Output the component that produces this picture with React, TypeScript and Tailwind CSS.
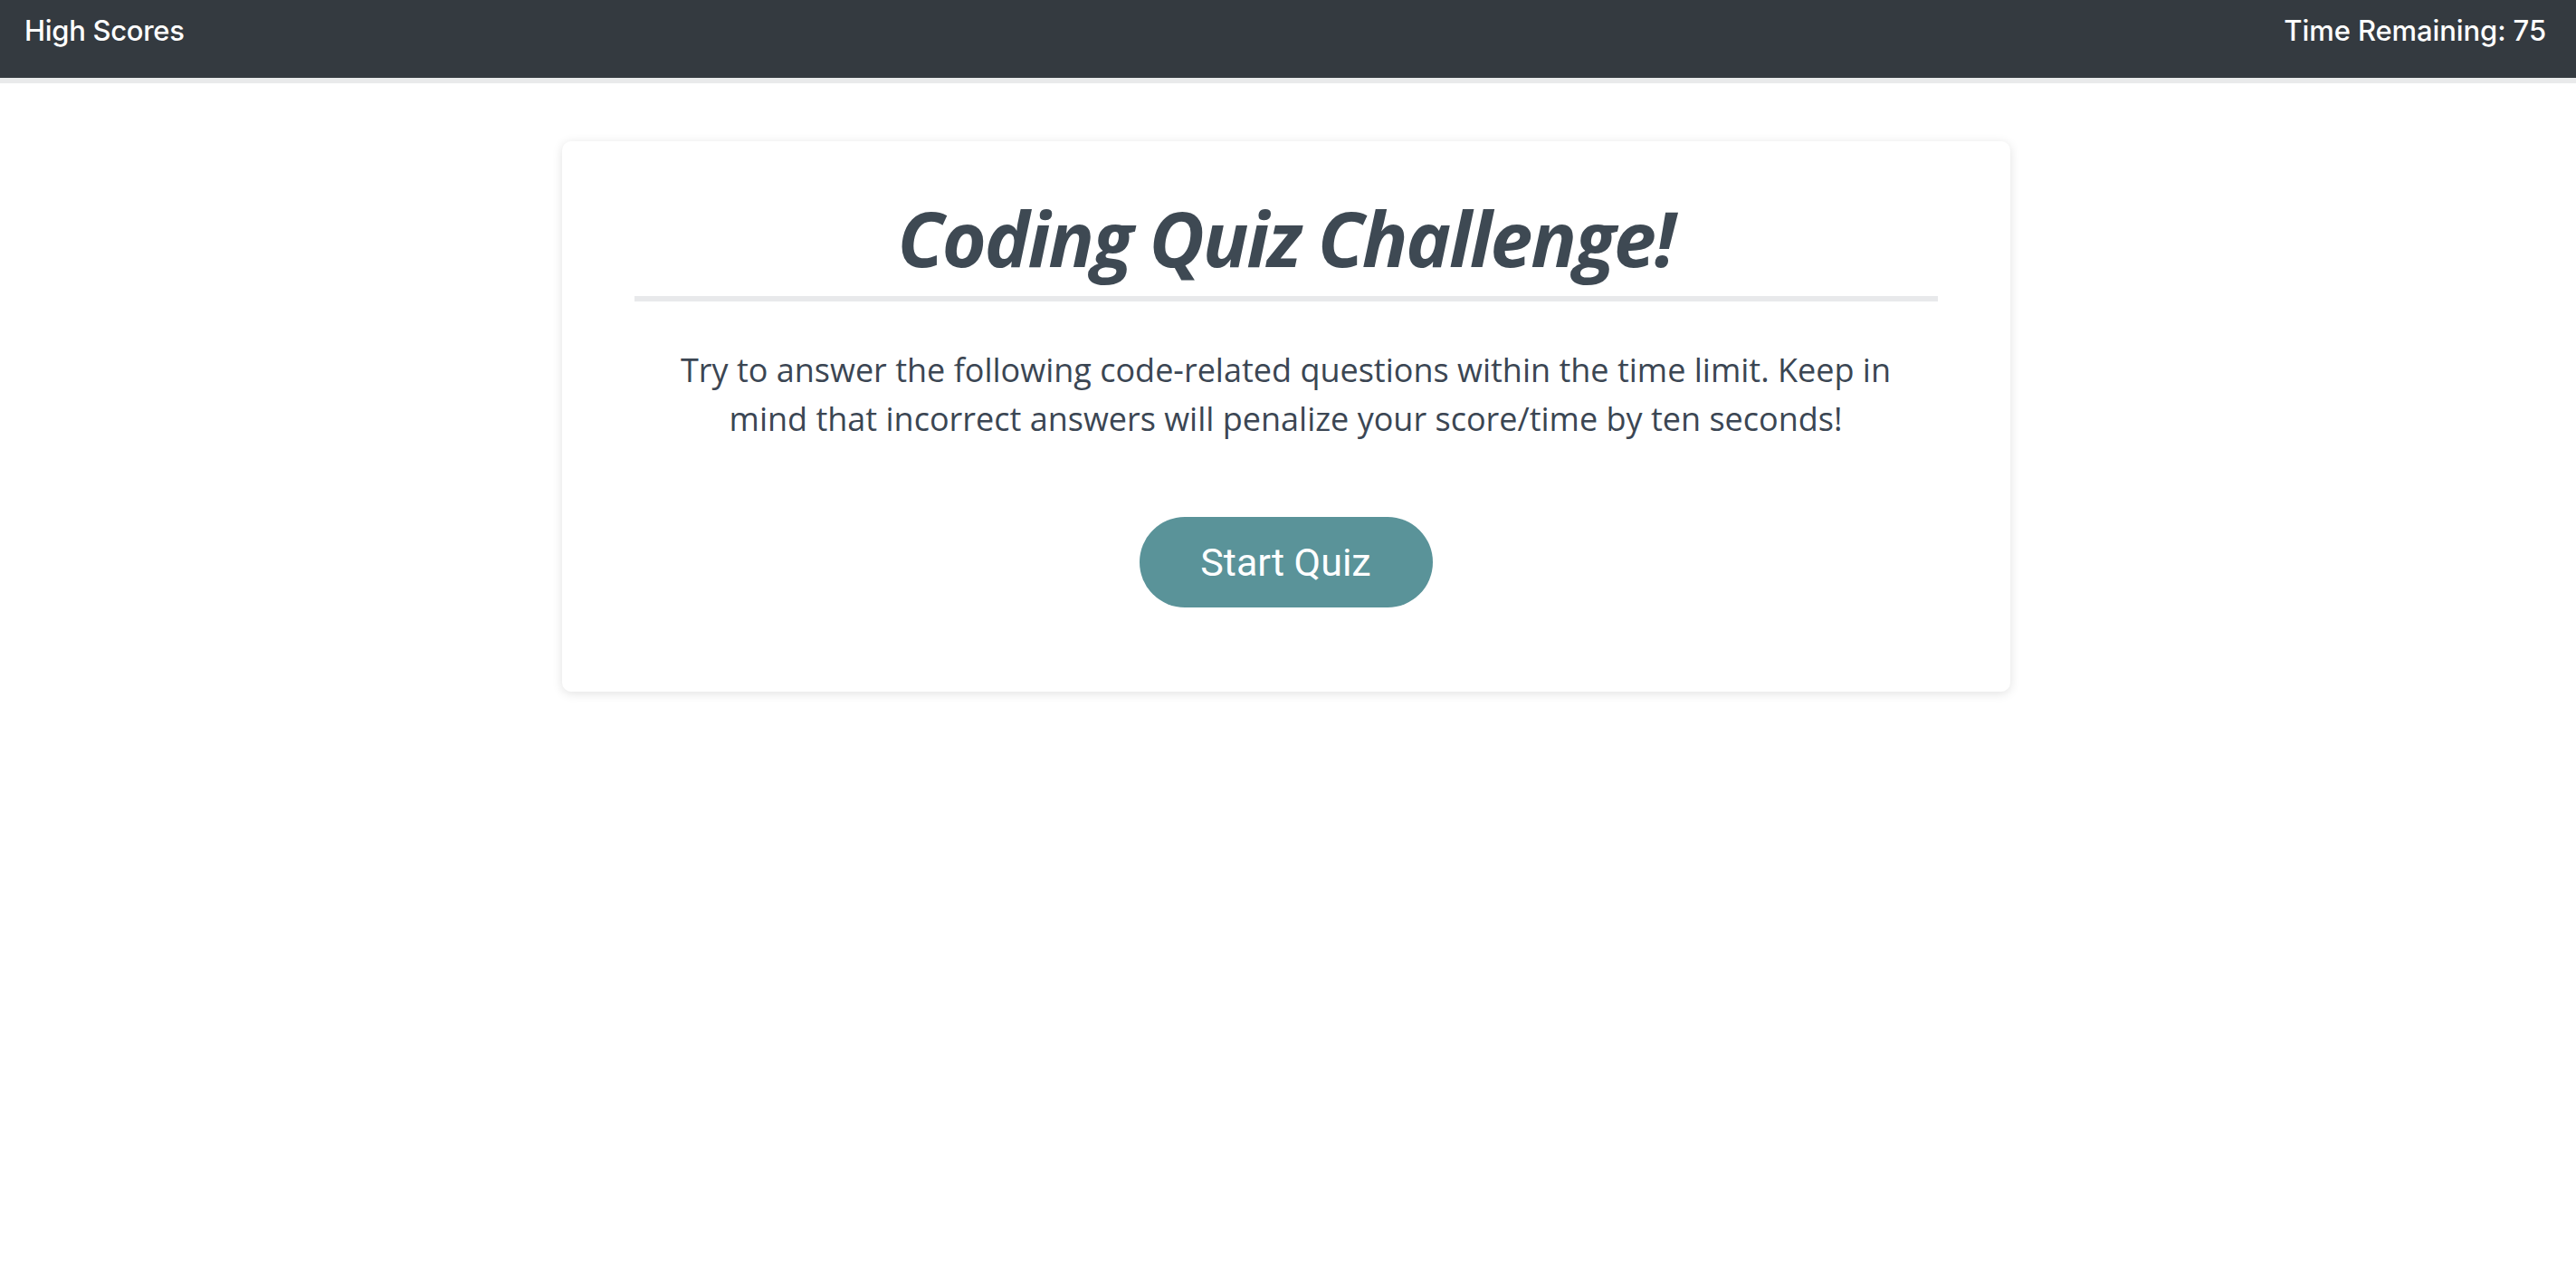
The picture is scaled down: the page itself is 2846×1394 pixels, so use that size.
import React from "react";

export default function App() {
  return (
    <div className="min-h-screen w-full bg-white">
      <header
        className="flex h-[92px] items-start justify-between border-b-[6px] border-[#e9eaeb] bg-[#343a40] px-[27px] pt-[18px] text-white"
        style={{ fontFamily: "Inter, 'Liberation Sans', sans-serif" }}
      >
        <a className="text-[31px] font-medium leading-none tracking-[-0.3px]">High Scores</a>
        <div className="mr-[6px] text-[31px] font-medium leading-none tracking-[-0.1px]">Time Remaining: 75</div>
      </header>

      <main className="flex justify-center pt-[64px] pr-[5px]">
        <section className="flex w-[1600px] flex-col items-center rounded-[10px] bg-white px-[80px] pt-[65px] pb-[93px] shadow-[0_2px_12px_rgba(0,0,0,0.12)]">
          <h1
            className="text-[84px] font-bold italic leading-none tracking-[-2.2px] text-[#3e4953]"
            style={{ fontFamily: "'Open Sans', sans-serif" }}
          >
            Coding Quiz Challenge!
          </h1>
          <div className="mt-[22px] h-[6px] w-full bg-[#e8e9eb]" />
          <p
            className="mt-[49px] max-w-[1390px] text-center text-[36px] leading-[54px] text-[#3b4653]"
            style={{ fontFamily: "'Open Sans', sans-serif" }}
          >
            Try to answer the following code-related questions within the time limit. Keep in mind that incorrect answers will penalize your score/time by ten seconds!
          </p>
          <button
            className="mt-[81px] flex h-[100px] w-[324px] items-center justify-center rounded-full bg-[#5a9399] text-[43px] text-white"
            style={{ fontFamily: "Roboto, 'Liberation Sans', sans-serif" }}
          >
            Start Quiz
          </button>
        </section>
      </main>
    </div>
  );
}
